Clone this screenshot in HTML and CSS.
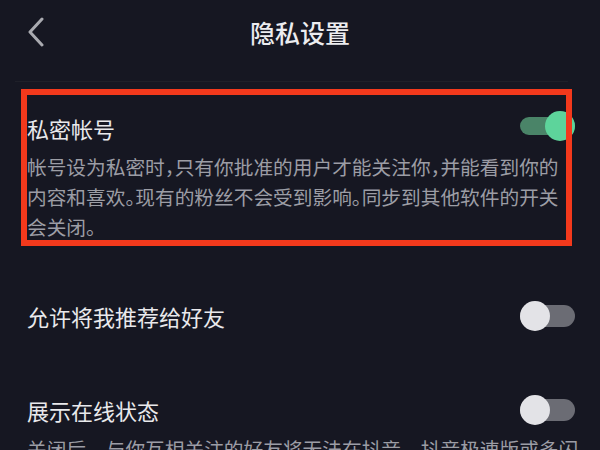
FILE: index.html
```html
<!DOCTYPE html>
<html lang="zh-CN">

<head>
    <meta charset="UTF-8">
    <meta name="viewport" content="width=device-width, initial-scale=1.0">
    <title>隐私设置</title>
    <link rel="stylesheet" href="styles.css">
</head>

<body>
    <div id="privacy">
        <header class="nav">
            <span class="back">
                <svg width="18" height="30" viewBox="0 0 18 30">
                    <polyline points="15,2 3,15 15,28" fill="none" stroke="#a9aab0" stroke-width="3" stroke-linecap="round" stroke-linejoin="round" />
                </svg>
            </span>
            <h1 class="title">隐私设置</h1>
        </header>

        <div class="list">
            <div class="item item-private">
                <div class="row">
                    <span class="label">私密帐号</span>
                    <span class="switch on"></span>
                </div>
                <p class="desc">帐号设为私密时，只有你批准的用户才能关注你，并能看到你的内容和喜欢。现有的粉丝不会受到影响。同步到其他软件的开关会关闭。</p>
            </div>

            <div class="item item-recommend">
                <div class="row">
                    <span class="label">允许将我推荐给好友</span>
                    <span class="switch"></span>
                </div>
            </div>

            <div class="item item-online">
                <div class="row">
                    <span class="label">展示在线状态</span>
                    <span class="switch"></span>
                </div>
                <p class="desc desc-wide">关闭后，与你互相关注的好友将无法在抖音、抖音极速版或多闪看到你的在线状态。</p>
            </div>
        </div>

        <div class="mark"></div>
    </div>
</body>

</html>
```

FILE: styles.css
```css
* {
    margin: 0;
    padding: 0;
    box-sizing: border-box;
}

body {
    background-color: #161722;
    font-family: "Noto Sans CJK SC", "Noto Sans", sans-serif;
    overflow: hidden;
}

#privacy {
    position: relative;
    width: 600px;
    height: 450px;
    overflow: hidden;
}

.nav {
    height: 82px;
    margin: 0 32px 0 15px;
    border-bottom: 1px solid #1f2029;
    display: flex;
    align-items: center;
    justify-content: center;
    position: relative;
}

.back {
    position: absolute;
    left: 12px;
    top: 17px;
    display: flex;
}

.title {
    font-size: 25px;
    font-weight: 500;
    color: #ececef;
    margin-left: 17px;
    margin-top: -18px;
}

.list {
    padding: 0 25px 0 27px;
}

.item-private {
    padding-top: 31px;
}

.item-recommend {
    padding-top: 59px;
}

.item-online {
    padding-top: 64px;
}

.row {
    display: flex;
    align-items: center;
    justify-content: space-between;
    height: 30px;
}

.label {
    font-size: 22px;
    color: #e9e9ec;
    line-height: 30px;
}

.desc {
    margin-top: 9px;
    width: 538px;
    font-size: 19.7px;
    line-height: 30px;
    color: #9c9da5;
    font-feature-settings: "halt";
}

.desc-wide {
    width: 560px;
    font-feature-settings: normal;
}

.switch {
    position: relative;
    width: 55px;
    height: 30px;
}

.switch::before {
    content: "";
    position: absolute;
    left: 0;
    right: 0;
    top: 4px;
    height: 22px;
    border-radius: 11px;
    background-color: #6b6c74;
}

.switch::after {
    content: "";
    position: absolute;
    left: 0;
    top: 0;
    width: 30px;
    height: 30px;
    border-radius: 50%;
    background-color: #e3e3e7;
}

.switch.on {
    margin-top: -4px;
}

.switch.on::before {
    top: 6px;
    height: 18px;
    background-color: #4a8468;
}

.switch.on::after {
    left: auto;
    right: 0;
    background-color: #5dd49b;
}

/* red frame drawn over the private account block */
.mark {
    position: absolute;
    left: 21px;
    top: 89px;
    width: 551px;
    height: 157px;
    border: 6px solid #f3391c;
}
```
